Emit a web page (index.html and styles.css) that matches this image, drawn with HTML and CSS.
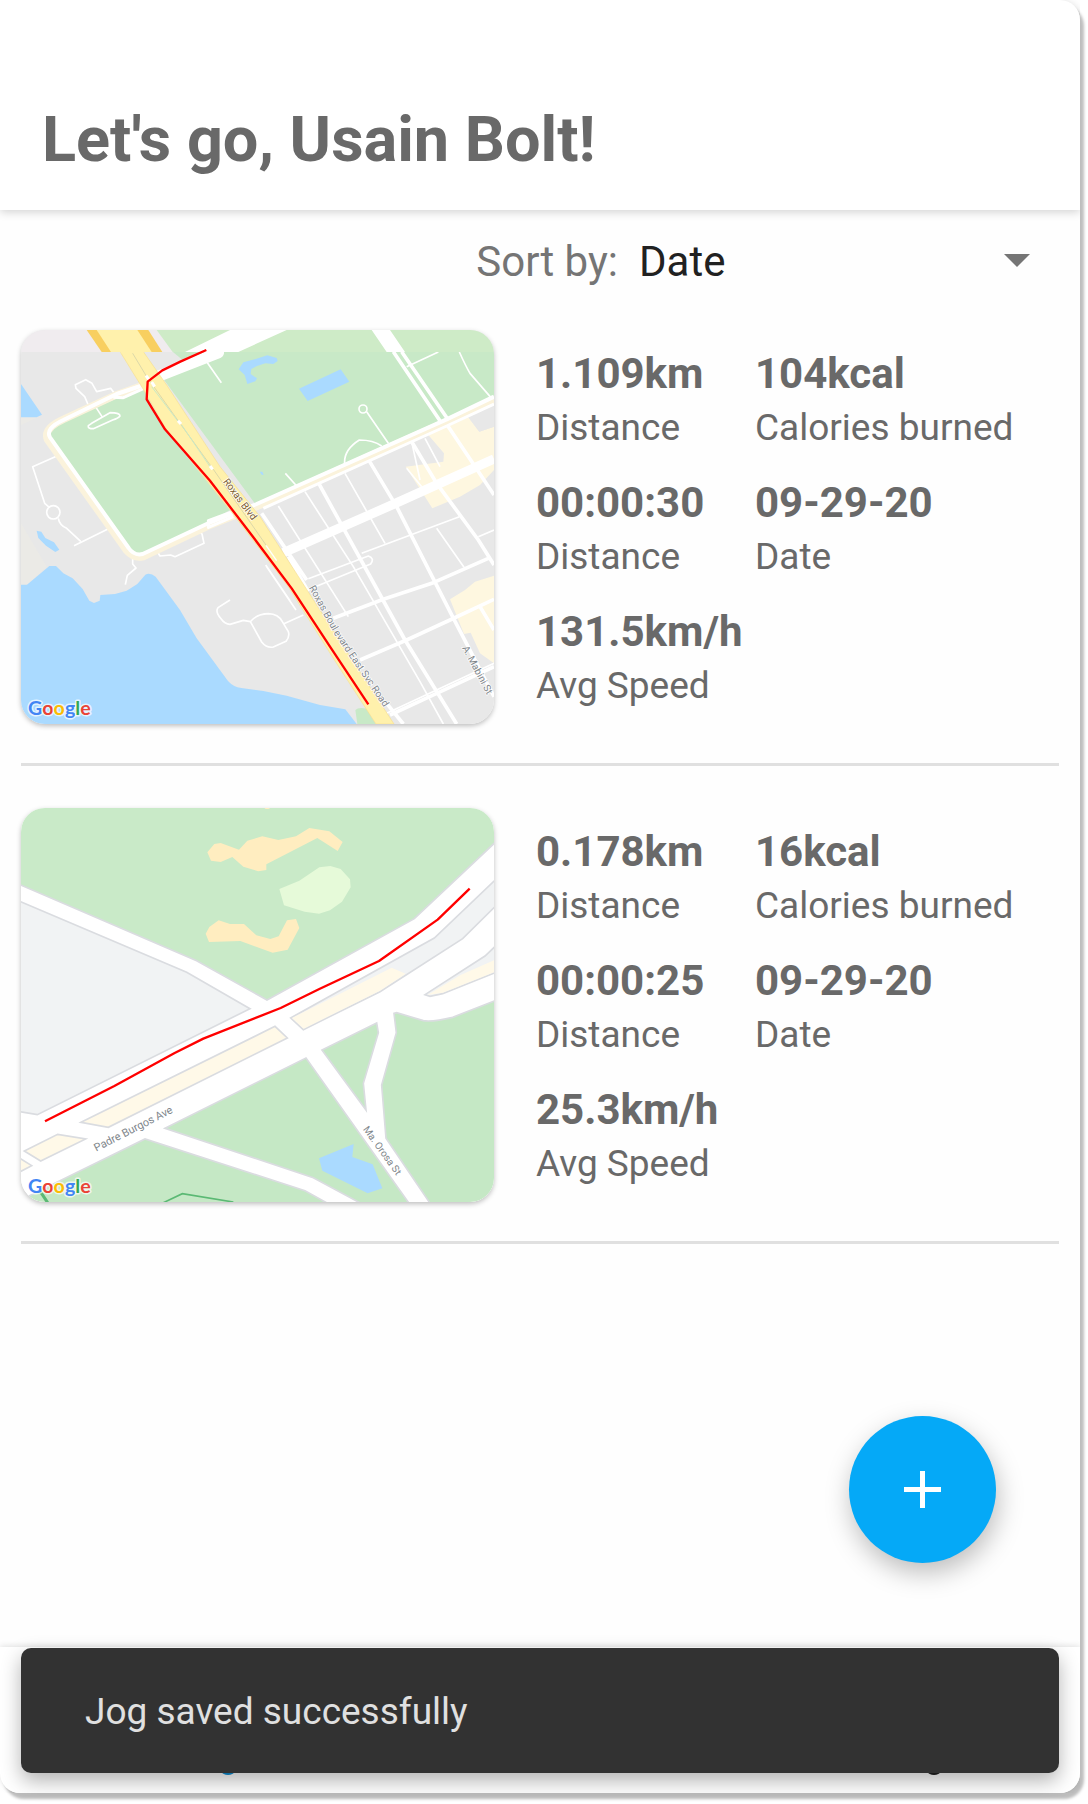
FILE: index.html
```html
<!DOCTYPE html>
<html lang="en">
<head>
<meta charset="utf-8">
<meta name="viewport" content="width=device-width, initial-scale=1">
<title>Jogs</title>
<link rel="stylesheet" href="styles.css">
</head>
<body>
<div class="screen">
  <header class="app-bar">
    <h1 class="app-title">Let's go, Usain Bolt!</h1>
  </header>

  <main class="content">
    <div class="sort">
      <label class="sort-label" for="sort">Sort by:</label>
      <div class="sort-field">
        <select class="sort-select" id="sort">
          <option>Date</option>
        </select>
        <svg class="sort-arrow" viewBox="0 0 26 13" aria-hidden="true"><path d="M0 0h26L13 13z"/></svg>
      </div>
    </div>

    <ul class="jogs">
      <li class="jog">
        <svg class="map" viewBox="63 60 1419 1182" role="img" aria-label="Route map">
          <rect x="63" y="60" width="1419" height="1182" fill="#e8e8e8"/>
          <!-- shore and water -->
          <path fill="#ebeae6" d="M63 322h50L63 345zM63 640L140 770 80 825H63z"/>
          <path fill="#aadaff" d="M63 222L126 314 110 322H63zM63 824H81L148 768H168L190 790 218 805 248 837 268 872 282 879 299 872 301 855 345 852 380 842 412 822 436 794Q450 786 467 800L540 900 590 985 684 1113Q700 1131 724 1134L790 1143 860 1157 960 1185 1036 1198 1070 1242H63zM110 662L124 665 136 684 162 697 178 719 166 726 138 707 115 684z"/>
          <!-- parks -->
          <path fill="#c8e9c7" d="M146 378Q150 360 190 334L430 232 480 340 690 600 620 640 418 738Q395 735 376 706zM430 125H1482V260L770 588zM1066 1200Q1075 1190 1100 1196L1128 1242H1072z"/>
          <path fill="#e8e8e8" d="M430 124H516L560 160 470 200z"/>
          <path fill="#aadaff" d="M716 178L730 157 767 147 802 136 830 144 833 153 820 162 796 160 771 168 754 177 752 192 771 205 766 214 742 222 734 195zM897 236L1022 178 1048 215 923 273zM779 485l8 0 4 10-6-1z"/>
          <!-- commercial areas -->
          <path fill="#fef7e0" d="M1285 375L1405 322 1438 365 1482 350V480L1440 525 1380 560 1297 595 1217 470 1330 455 1332 430zM1350 868L1395 840 1425 815 1482 797V1060L1440 1030 1412 968 1392 972z"/>
          <path fill="#e8e8e8" d="M1405 322L1450 300 1482 290V350L1438 365z"/>
          <!-- minor streets -->
          <g fill="none" stroke="#fff" stroke-width="5" stroke-linejoin="round">
            <path d="M620 155L664 218M1220 170L1315 126M1378 126Q1398 170 1410 190L1475 265M1100 305L1165 400M1145 408Q1120 390 1078 390 1030 420 1034 463M856 490L890 528"/>
            <circle cx="1089" cy="297" r="12"/>
            <path d="M343 250L332 235 290 245 276 220 257 209 226 224 228 235 254 260 266 288M288 292L306 320M275 340L330 308Q360 308 360 318 355 325 338 330L280 356Q262 356 265 347zL275 338"/>
            <path d="M176 436L98 470 134 580 148 592M175 625Q178 645 200 655L242 694M222 707L330 654M398 740V762L408 774 382 796 376 824M470 722L480 738 512 735 525 740 612 700 606 672 598 664"/>
            <circle cx="160" cy="607" r="20"/>
            <path d="M690 870L654 893Q645 905 662 925 674 943 690 943L730 931 751 935 785 996Q800 1015 820 1011L858 994Q870 980 865 965L847 935Q835 912 805 911 770 912 751 935M850 942L910 915M797 765L870 872M800 770L888 900"/>
            <path d="M835 588L1045 920M915 545L1060 770 1260 1115 1330 1242M1035 490L1155 700M1235 395L1260 510M1275 385L1320 470M925 806L1105 738Q1125 745 1112 762L935 835M1085 730L1378 620M1310 655L1392 772M1160 1210L1482 1060M1435 680L1482 660M1220 475L1265 530"/>
          </g>
          <g fill="none" stroke="#fff" stroke-width="11" stroke-linejoin="round">
            <path d="M785 610L920 810M955 518L1215 990 1370 1242M1105 448L1190 590 1350 905 1482 1160M1232 390L1310 520 1435 690 1482 765M1335 335L1422 465 1482 555M865 740L925 845M1000 925L1150 868 1300 818 1465 745M1080 1050L1220 990 1350 930 1482 868M1160 1180L1210 1242M1440 890L1482 960M1170 1215L1310 1150 1482 1070"/>
            <path d="M1180 125L1325 340M1205 125L1345 330"/>
          </g>
          <path fill="none" stroke="#fff" stroke-width="28" d="M850 728L1160 592 1482 447"/>
          <!-- park ring road -->
          <g fill="none" stroke-linejoin="round">
            <path stroke="#fbf3dc" stroke-width="22" d="M440 222L350 254 190 328Q130 355 142 388L380 722Q402 747 430 740L620 650 770 590 1340 335 1482 270"/>
            <path stroke="#fff" stroke-width="12" d="M440 222L350 252 190 330Q135 355 150 382L386 714Q402 738 428 732L620 642 770 582 1340 328 1482 260"/>
            <path stroke="#fff" stroke-width="9" d="M430 236L370 263 340 262M700 620L625 652V632L700 604M790 595L1340 348 1482 282"/>
            <path stroke="#fff" stroke-width="34" stroke-linecap="round" d="M440 212L655 128"/>
          </g>
          <!-- Roxas Boulevard -->
          <path fill="#fff1ac" stroke="#f7df91" stroke-width="2" d="M362 128Q374 108 390 118 402 106 425 118L500 225 660 470 780 620 905 815 1050 1040 1182 1242H1128L1000 1045 865 830 690 600 500 360 430 238z"/>
          <g fill="none">
            <path stroke="#dcd8a9" stroke-width="3" d="M392 120L440 200 540 340 640 478 800 708"/>
            <path stroke="#c8e9c7" stroke-width="3" d="M455 230L535 335M545 345L630 470"/>
            <path stroke="#fff" stroke-width="9" d="M438 197L450 213M455 216L464 230M534 332L543 342M630 468L638 478"/>
            <path stroke="#fff" stroke-width="4" d="M798 706L830 752"/>
          </g>
          <!-- coarse tile along the top edge -->
          <path fill="#f0ecef" d="M63 60H480L530 126H63z"/>
          <path fill="#ceebc7" d="M470 60H1482V126H518z"/>
          <path fill="#fff" d="M690 60H860L715 126H555zM1115 60H1170L1215 126H1160z"/>
          <path fill="#f8cf60" d="M260 60H445L487 126H305z"/>
          <path fill="#fff1ac" d="M290 60H412L455 126H333z"/>
          <path fill="#fff1ac" d="M362 128Q374 106 390 118 402 106 425 118L432 130H362z"/>
          <path fill="none" stroke="#fff" stroke-width="24" stroke-linecap="round" d="M560 165L658 126"/>
          <path class="route" d="M619 120L541 155 487 181 443 215 440 268 495 358 630 512 760 682 875 835 990 1010 1105 1183"/>
          <g class="street">
            <text transform="translate(668 515) rotate(53)" fill="#7b5b2b">Roxas Blvd</text>
            <text transform="translate(926 833) rotate(61)">Roxas Boul</text>
            <text transform="translate(1000 968) rotate(56)">evard East Svc Road</text>
            <text transform="translate(1386 1014) rotate(62)">A. Mabini St</text>
          </g>
          <text class="google" x="84" y="1214"><tspan fill="#4285f4">G</tspan><tspan fill="#ea4335">o</tspan><tspan fill="#fbbc05">o</tspan><tspan fill="#4285f4">g</tspan><tspan fill="#34a853">l</tspan><tspan fill="#ea4335">e</tspan></text>
        </svg>
        <dl class="stats">
          <div class="stat"><dd>1.109km</dd><dt>Distance</dt></div>
          <div class="stat"><dd>104kcal</dd><dt>Calories burned</dt></div>
          <div class="stat"><dd>00:00:30</dd><dt>Distance</dt></div>
          <div class="stat"><dd>09-29-20</dd><dt>Date</dt></div>
          <div class="stat"><dd>131.5km/h</dd><dt>Avg Speed</dt></div>
        </dl>
      </li>

      <li class="jog">
        <svg class="map" viewBox="63 54 1419 1182" role="img" aria-label="Route map">
          <rect x="63" y="54" width="1419" height="1182" fill="#fff"/>
          <g stroke="#dadce0" stroke-width="5">
            <path fill="#c9eac8" d="M55 46H1490V153L1243 386 801 630 590 512 55 282z"/>
            <path fill="#f1f3f4" d="M55 332L560 547 750 656 112 974 55 964z"/>
            <path fill="#f1f3f4" d="M1490 266L1303 444 872 684 910 719 1140 605 1388 446 1490 345zM1490 465L1455 498 1275 614 1290 619 1328 611 1490 546z"/>
            <path fill="#fff9e8" d="M243 997L825 709 862 744 325 1012zM73 1083L173 1033 257 1047 122 1113zM55 1102L95 1127 55 1148z"/>
            <path fill="#c5e8c5" d="M50 1236L435 1047 915 1202 990 1244H50zM495 1015L918 804 1230 1244H1090L940 1163zM966 780L1130 699 1135 728 1090 880 1098 960zM1182 670L1190 668 1270 692Q1300 696 1358 682L1490 630V1244H1293L1158 1045 1145 885 1189 728z"/>
          </g>
          <path fill="#fff9e8" d="M876 684L1175 533 1217 551 1140 602 911 716zM1482 511V547L1328 608 1283 615 1380 556z"/>
          <path fill="#ffedc0" d="M622 187L643 162 662 159 717 179 742 152 787 139 835 150 888 139 928 114 988 124 1028 156 1013 183 952 144 799 223V240L775 244 730 230 697 201 662 216 633 212zM617 431L628 411 656 391 690 402H732L769 436 811 447 836 439 861 391 888 387 898 414 863 479 818 488 721 453 627 456zM793 54h18l-6 3h-8z"/>
          <path fill="#e6fad9" d="M838 297L898 272 958 232 991 228 1022 237 1050 268 1052 292 1026 335 990 361 957 371 914 365 852 346z"/>
          <path fill="#aadaff" d="M957 1105L1061 1062 1057 1101 1118 1123 1147 1195 1103 1210 967 1142z"/>
          <path fill="none" stroke="#5bb974" stroke-width="5" d="M490 1238L547 1211 700 1236"/>
          <path fill="none" stroke="#5bb974" stroke-width="9" d="M121 1205L143 1238"/>
          <path class="route" d="M135 994L343 888 524 789 610 746 842 654 958 597 1137 513 1313 389 1409 296"/>
          <g class="street">
            <text class="street-wide" transform="translate(289 1085) rotate(-27)">Padre Burgos Ave</text>
            <text transform="translate(1088 1018) rotate(54)">Ma. Orosa St</text>
          </g>
          <text class="google" x="84" y="1208"><tspan fill="#4285f4">G</tspan><tspan fill="#ea4335">o</tspan><tspan fill="#fbbc05">o</tspan><tspan fill="#4285f4">g</tspan><tspan fill="#34a853">l</tspan><tspan fill="#ea4335">e</tspan></text>
        </svg>
        <dl class="stats">
          <div class="stat"><dd>0.178km</dd><dt>Distance</dt></div>
          <div class="stat"><dd>16kcal</dd><dt>Calories burned</dt></div>
          <div class="stat"><dd>00:00:25</dd><dt>Distance</dt></div>
          <div class="stat"><dd>09-29-20</dd><dt>Date</dt></div>
          <div class="stat"><dd>25.3km/h</dd><dt>Avg Speed</dt></div>
        </dl>
      </li>
    </ul>
  </main>

  <div class="bottom-bar">
    <svg class="bar-mark" viewBox="0 0 12 6" aria-hidden="true"><ellipse cx="6" cy="3" rx="6" ry="3" fill="#0d8fd6"/></svg>
    <svg class="bar-mark" viewBox="0 0 12 6" aria-hidden="true"><ellipse cx="6" cy="3" rx="6" ry="3" fill="#222"/></svg>
  </div>

  <button class="fab" type="button" aria-label="Add jog">
    <svg class="fab-icon" viewBox="0 0 37 37" aria-hidden="true"><path d="M16 0h5v16h16v5H21v16h-5V21H0v-5h16z"/></svg>
  </button>
  <div class="snackbar" role="status">Jog saved successfully</div>
</div>
</body>
</html>
```
FILE: styles.css
```css
* {
  box-sizing: border-box;
}

body {
  margin: 0;
  background: #fff;
  color: #696969;
  font-family: Roboto, "Liberation Sans", sans-serif;
}

.screen {
  position: relative;
  display: flex;
  flex-direction: column;
  min-height: calc(100vh - 11px);
  margin: 0 8px 11px 0;
  border-radius: 0 20px 20px 20px;
  background: #fefefe;
  box-shadow: 4px 6px 3px rgba(0, 0, 0, 0.26);
}

.app-bar {
  padding: 103px 42px 33px;
  border-top-right-radius: 20px;
  background: #fff;
  box-shadow: 0 2px 10px rgba(0, 0, 0, 0.18);
  clip-path: inset(0 0 -16px 0);
}

.app-title {
  margin: 0;
  font-size: 63px;
  font-weight: 700;
  line-height: 74px;
}

.content {
  flex: 1;
  padding: 0 21px;
}

.sort {
  display: flex;
  align-items: center;
  justify-content: flex-end;
  height: 104px;
  font-size: 42px;
  line-height: 50px;
}

.sort-label {
  color: #757575;
}

.sort-field {
  position: relative;
  flex: 0 1 441px;
}

.sort-select {
  width: 100%;
  padding: 0 60px 0 21px;
  border: 0;
  appearance: none;
  background: transparent;
  color: #212121;
  font: inherit;
}

.sort-arrow {
  position: absolute;
  top: 17px;
  right: 29px;
  width: 26px;
  height: 13px;
  fill: #757575;
  pointer-events: none;
}

.jogs {
  display: grid;
  gap: 42px;
  margin: 0;
  padding: 16px 0 0;
  list-style: none;
}

.jog {
  display: grid;
  grid-template-columns: 473fr 523fr;
  gap: 42px;
  align-items: start;
  padding-bottom: 39px;
  border-bottom: 3px solid #e0e0e0;
}

.map {
  display: block;
  width: 100%;
  border-radius: 24px;
  box-shadow: 0 2px 5px rgba(0, 0, 0, 0.25);
}

.route {
  fill: none;
  stroke: #f00;
  stroke-width: 7;
  stroke-linejoin: round;
}

.street {
  fill: #80868b;
  stroke: #fff;
  stroke-width: 4px;
  paint-order: stroke;
  font-size: 30px;
}

.street-wide {
  font-size: 33px;
}

.google {
  stroke: rgba(255, 255, 255, 0.7);
  stroke-width: 9px;
  stroke-linejoin: round;
  paint-order: stroke;
  font-family: Lato, sans-serif;
  font-size: 59px;
  font-weight: 700;
}

.stats {
  display: grid;
  grid-template-columns: 219px 1fr;
  row-gap: 29px;
  margin: 0;
  padding-top: 19px;
}

.stat {
  display: flex;
  flex-direction: column;
  gap: 8px;
  white-space: nowrap;
}

.stat dd {
  margin: 0;
  font-size: 42px;
  font-weight: 700;
  line-height: 49px;
}

.stat dt {
  font-size: 37px;
  line-height: 43px;
}

.bottom-bar {
  display: flex;
  align-items: flex-end;
  justify-content: space-between;
  height: 146px;
  padding: 0 140px 18px 222px;
  border-radius: 0 0 20px 20px;
  background: #fff;
  box-shadow: 0 -1px 6px rgba(0, 0, 0, 0.12);
  clip-path: inset(-10px 0 0 0);
}

.bar-mark {
  width: 12px;
  height: 6px;
}

.fab {
  position: absolute;
  right: 84px;
  bottom: 230px;
  display: grid;
  place-items: center;
  width: 147px;
  height: 147px;
  padding: 0;
  border: 0;
  border-radius: 50%;
  background: #05a9f7;
  box-shadow: 2px 10px 26px rgba(0, 0, 0, 0.26);
}

.fab-icon {
  width: 37px;
  height: 37px;
  fill: #fff;
}

.snackbar {
  position: absolute;
  right: 21px;
  bottom: 20px;
  left: 21px;
  padding: 42px 64px 40px;
  border-radius: 10px;
  background: #323232;
  box-shadow: 0 8px 20px rgba(0, 0, 0, 0.3);
  color: #e0e0e0;
  font-size: 37px;
  line-height: 43px;
}
```
